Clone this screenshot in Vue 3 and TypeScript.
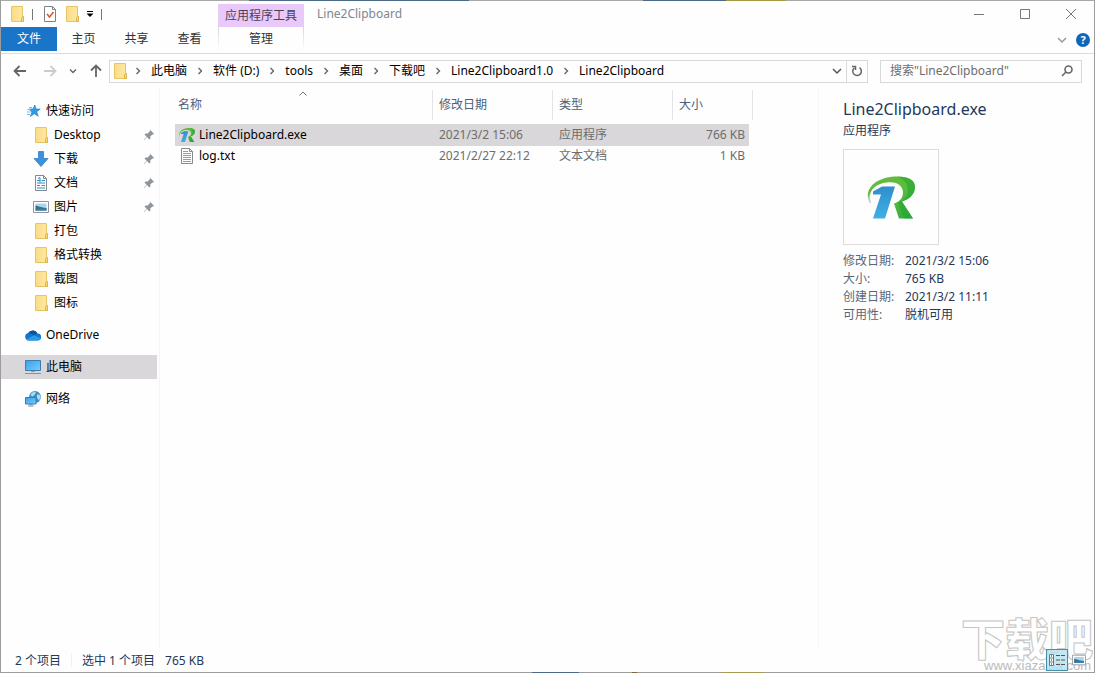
<script setup lang="ts">
import { ref } from 'vue'

interface NavItem {
  label: string
  icon: string
  pinned?: boolean
}
interface FileRow {
  name: string
  icon: string
  modified: string
  type: string
  size: string
}

const tabs = ['主页', '共享', '查看']
const crumbs = ['此电脑', '软件 (D:)', 'tools', '桌面', '下载吧', 'Line2Clipboard1.0', 'Line2Clipboard']
const quick: NavItem[] = [
  { label: 'Desktop', icon: 'folder', pinned: true },
  { label: '下载', icon: 'download', pinned: true },
  { label: '文档', icon: 'document', pinned: true },
  { label: '图片', icon: 'picture', pinned: true },
  { label: '打包', icon: 'folder' },
  { label: '格式转换', icon: 'folder' },
  { label: '截图', icon: 'folder' },
  { label: '图标', icon: 'folder' },
]
const roots: NavItem[] = [
  { label: 'OneDrive', icon: 'cloud' },
  { label: '此电脑', icon: 'pc' },
  { label: '网络', icon: 'network' },
]
const files: FileRow[] = [
  { name: 'Line2Clipboard.exe', icon: 'logo', modified: '2021/3/2 15:06', type: '应用程序', size: '766 KB' },
  { name: 'log.txt', icon: 'text', modified: '2021/2/27 22:12', type: '文本文档', size: '1 KB' },
]
const facts = [
  ['修改日期:', '2021/3/2 15:06'],
  ['大小:', '765 KB'],
  ['创建日期:', '2021/3/2 11:11'],
  ['可用性:', '脱机可用'],
]
const selected = ref('Line2Clipboard.exe')
const place = ref('此电脑')
const query = ref('')
</script>

<template>
  <svg class="defs" aria-hidden="true">
    <defs>
      <linearGradient id="g-folder" x1="0" y1="0" x2="1" y2="0">
        <stop offset="0" stop-color="#fbdc86" /><stop offset="1" stop-color="#fde9a4" />
      </linearGradient>
      <linearGradient id="g-green" x1="0" y1="0" x2="1" y2="1">
        <stop offset="0" stop-color="#6cb644" /><stop offset="0.5" stop-color="#5abf3a" /><stop offset="1" stop-color="#2aa83a" />
      </linearGradient>
      <linearGradient id="g-blue" x1="0" y1="0" x2="0" y2="1">
        <stop offset="0" stop-color="#2f8fcb" /><stop offset="1" stop-color="#3fb0e6" />
      </linearGradient>
      <linearGradient id="g-screen" x1="0" y1="0" x2="1" y2="1">
        <stop offset="0" stop-color="#3aa0ee" /><stop offset="1" stop-color="#74cdfb" />
      </linearGradient>
    </defs>
    <symbol id="i-folder" viewBox="-1 0 16 16">
      <path d="M1.5.5h11v10h1v5h-12z" fill="url(#g-folder)" stroke="#e8c468" />
      <path d="M11.5 15.5v-4l1-1h1v5z" fill="#fbd873" stroke="#dfb44c" />
    </symbol>
    <symbol id="i-star" viewBox="0 0 16 16">
      <path d="M9.8 2l1.2 4 4.200.1-3.500 2.600 1.500 4.500-3.900-2.500-3.900 2.900 1.600-4.600L4 6.200l4.100-.3z" fill="#2f9be6" stroke="#2482cc" stroke-width=".7" />
      <path d="M4 4.500h3M2.500 6.500h3M2 9h3.500M2 11.500h3" stroke="#6cbdf0" />
    </symbol>
    <symbol id="i-download" viewBox="0 0 16 16">
      <path d="M5.500.5h5v7h4.500L8 15.500 1 7.500h4.500z" fill="#3c91dc" stroke="#2f7fc8" stroke-width=".8" />
    </symbol>
    <symbol id="i-document" viewBox="0 0 16 16">
      <path d="M2.500.5h8l3 3v12h-11z" fill="#fff" stroke="#7f8a92" />
      <path d="M10.500.5v3h3" fill="none" stroke="#7f8a92" />
      <path d="M4 5.500h3M8.500 5.500h3.500M4 8h8M4 10.500h3M8.500 10.500h3.500M4 13h8" stroke="#2f8cc4" stroke-width="1.200" />
      <path d="M5 3.500l2-1v5" fill="none" stroke="#2f8cc4" />
    </symbol>
    <symbol id="i-picture" viewBox="0 0 16 16">
      <path d="M.5 2.500h15v11H.5z" fill="#fff" stroke="#8d969d" />
      <path d="M2.500 4.500h11v7h-11z" fill="#a8d6f2" />
      <path d="M2.500 6.500c3 .5 5 2 11 2.500v2.500h-11z" fill="#3f6f7e" />
      <path d="M2.500 10.500c4-1.500 7-.5 11-1v2h-11z" fill="#3b7fb2" />
    </symbol>
    <symbol id="i-cloud" viewBox="0 0 16 16">
      <path d="M3.800 13.500a3.800 3.800 0 0 1-.6-7.500A5.300 5.300 0 0 1 12.500 6.500 3.500 3.500 0 0 1 12.800 13.500z" fill="#1273cc" />
      <path d="M3.200 6A5.300 5.300 0 0 1 12.500 6.500c-2 .2-3.200 1.200-3.700 2C7.300 7 5.500 6 3.200 6z" fill="#0f52a0" />
      <path d="M.9 12.200L9 8.200l6.900 2.800c-.3 1.500-1.500 2.500-3.100 2.500h-9c-1.200 0-2.200-.5-2.900-1.300z" fill="#2a9ae8" />
    </symbol>
    <symbol id="i-pc" viewBox="0 0 16 16">
      <path d="M.5 1.500h15v10H.5z" fill="url(#g-screen)" stroke="#3c7ca8" />
      <path d="M6 12h4v1H6z" fill="#8fa3b0" /><path d="M0 14.500h16" stroke="#8193a0" />
    </symbol>
    <symbol id="i-network" viewBox="0 0 16 16">
      <circle cx="10" cy="6" r="5.900" fill="#3a8cc4" />
      <path d="M5.500 3.500C7.500 1 9.500.6 11 1L9.500 4 7 5.800zM12 3.500l2.500 0 1.300 3-2 3-2-3z" fill="#a9dcf0" />
      <path d="M.5 6.500h10.500v6.500H.5z" fill="url(#g-screen)" stroke="#327cb4" />
      <path d="M4.500 13.500h3M3 15h5.500" stroke="#73899a" />
    </symbol>
    <symbol id="i-text" viewBox="0 0 16 16">
      <path d="M2.500.5h8l3 3v12h-11z" fill="#fff" stroke="#8a8a8a" />
      <path d="M10.500.5v3h3" fill="none" stroke="#8a8a8a" />
      <path d="M4 3.500h5M4 5.500h8M4 7.500h8M4 9.500h8M4 11.500h8M4 13.500h8" stroke="#9a9a9a" />
    </symbol>
    <symbol id="i-logo" viewBox="0 0 48 42">
      <path d="M1 22C-1 8 14 0 30 0c12 0 18 4 18 10.500C48 18 42 23 35 25l11 17H32L27 27c6-2 9-6 9-11C36 8 28 5 20 6 9 7 3 13 2.500 21z" fill="url(#g-green)" />
      <path d="M30 0c12 0 18 4 18 10.500C48 18 42 23 35 25l11 17H37L31 26c6-2 10-6 10-12C41 7 37 3 30 0z" fill="#27a535" opacity=".6" />
      <path d="M1 20c0 3 1 5 2 7l1-1c-1-2-1-4-1-7z" fill="#bcc8bd" />
      <path d="M6 15l9-5h13L18 42H6l8-24H6z" fill="url(#g-blue)" />
    </symbol>
    <symbol id="i-pin" viewBox="0 0 12 12">
      <path d="M7 .8L11.200 5l-1.400.5-.5-.1-2 2 .1 2.100-1 1L4 8 .8 11.200 1 10.500 3.700 7.700 1.500 5.400l1-1 2.100.1 2-2z" fill="#8d959d" />
    </symbol>
    <symbol id="i-crumb" viewBox="0 0 6 8">
      <path d="M1.500 1l3 3-3 3" fill="none" stroke="#666" stroke-width="1.400" />
    </symbol>
    <symbol id="i-down" viewBox="0 0 10 10">
      <path d="M1 3l4 4 4-4" fill="none" stroke="currentColor" stroke-width="1.500" />
    </symbol>
  </svg>

  <div class="window">
    <header class="titlebar">
      <div class="quickbar">
        <svg class="ic"><use href="#i-folder" /></svg>
        <i class="bar"></i>
        <button aria-label="属性">
          <svg class="ic" viewBox="0 0 16 16">
            <path d="M2.500.5h8l3 3v12h-11z" fill="#fff" stroke="#808080" />
            <path d="M10.500.5v3h3" fill="none" stroke="#808080" />
            <path d="M5 8l2.500 3L11.500 6" fill="none" stroke="#d65a33" stroke-width="1.600" />
          </svg>
        </button>
        <button aria-label="新建文件夹"><svg class="ic"><use href="#i-folder" /></svg></button>
        <button aria-label="自定义快速访问工具栏">
          <svg class="menu-arrow" viewBox="0 0 8 8"><path d="M1 1.500h6" stroke="#000" /><path d="M.5 3.500h7L4 7z" /></svg>
        </button>
        <i class="bar"></i>
      </div>
      <div class="context-label">应用程序工具</div>
      <h1>Line2Clipboard</h1>
      <div class="controls">
        <button aria-label="最小化"><svg viewBox="0 0 12 12"><path d="M1 6.500h10" /></svg></button>
        <button aria-label="最大化"><svg viewBox="0 0 12 12"><path d="M1.500 1.500h9v9h-9z" /></svg></button>
        <button aria-label="关闭"><svg viewBox="0 0 12 12"><path d="M1 1l10 10M11 1L1 11" /></svg></button>
      </div>
    </header>

    <div class="ribbon">
      <button class="file-tab">文件</button>
      <button v-for="t in tabs" :key="t" class="tab">{{ t }}</button>
      <button class="context-tab">管理</button>
      <div class="ribbon-end">
        <button class="expand" aria-label="展开功能区"><svg class="s10"><use href="#i-down" /></svg></button>
        <button class="help" aria-label="帮助">?</button>
      </div>
    </div>

    <div class="addressrow">
      <div class="history">
        <button aria-label="返回"><svg viewBox="0 0 14 14"><path d="M13 7H2M6.500 2L1.500 7l5 5" /></svg></button>
        <button aria-label="前进" class="off"><svg viewBox="0 0 14 14"><path d="M1 7h11M7.500 2l5 5-5 5" /></svg></button>
        <button aria-label="最近浏览的位置" class="recent"><svg viewBox="0 0 14 14"><path d="M4 5.500l3 3 3-3" /></svg></button>
        <button aria-label="上移"><svg viewBox="0 0 14 14"><path d="M7 13V2M2 6.500l5-5 5 5" /></svg></button>
      </div>
      <nav class="address" aria-label="地址">
        <svg class="ic"><use href="#i-folder" /></svg>
        <template v-for="c in crumbs" :key="c">
          <svg class="sep"><use href="#i-crumb" /></svg>
          <button class="crumb">{{ c }}</button>
        </template>
        <button class="drop" aria-label="以前的位置"><svg class="s10"><use href="#i-down" /></svg></button>
        <button class="refresh" aria-label="刷新">
          <svg viewBox="0 0 12 12"><path d="M8.500 2.700A4.300 4.300 0 1 1 3.200 3M1 1.500h3.500V5" fill="none" stroke="#666" stroke-width="1.500" /></svg>
        </button>
      </nav>
      <label class="search">
        <input v-model="query" type="text" aria-label="搜索" placeholder='搜索"Line2Clipboard"' />
        <svg viewBox="0 0 12 12"><circle cx="7.500" cy="4.500" r="3.500" /><path d="M5 7L1 11" /></svg>
      </label>
    </div>

    <div class="body">
      <nav class="sidebar" aria-label="导航窗格">
        <button class="node"><svg class="ic"><use href="#i-star" /></svg><span>快速访问</span></button>
        <button v-for="n in quick" :key="n.label" class="node child">
          <svg class="ic"><use :href="'#i-' + n.icon" /></svg><span>{{ n.label }}</span>
          <svg v-if="n.pinned" class="pin"><use href="#i-pin" /></svg>
        </button>
        <button v-for="n in roots" :key="n.label" class="node root" :class="{ active: n.label === place }" @click="place = n.label">
          <svg class="ic"><use :href="'#i-' + n.icon" /></svg><span>{{ n.label }}</span>
        </button>
      </nav>

      <main class="list">
        <table>
          <colgroup><col class="c-name" /><col class="c-mid" /><col class="c-mid" /><col class="c-size" /></colgroup>
          <thead>
            <tr>
              <th scope="col" aria-sort="ascending">名称
                <svg class="sort" viewBox="0 0 8 5"><path d="M.5 4.500L4 1l3.500 3.500" /></svg>
              </th>
              <th scope="col">修改日期</th>
              <th scope="col">类型</th>
              <th scope="col">大小</th>
            </tr>
          </thead>
          <tbody>
            <tr v-for="f in files" :key="f.name" :class="{ selected: f.name === selected }" @click="selected = f.name">
              <td class="name"><div><svg class="ic"><use :href="'#i-' + f.icon" /></svg>{{ f.name }}</div></td>
              <td>{{ f.modified }}</td>
              <td>{{ f.type }}</td>
              <td class="num">{{ f.size }}</td>
            </tr>
          </tbody>
        </table>
      </main>

      <aside class="details">
        <h2>Line2Clipboard.exe</h2>
        <p>应用程序</p>
        <div class="thumb"><svg><use href="#i-logo" /></svg></div>
        <dl>
          <template v-for="[k, v] in facts" :key="k"><dt>{{ k }}</dt><dd>{{ v }}</dd></template>
        </dl>
      </aside>
    </div>

    <footer class="status">
      <span>2 个项目</span><i></i><span>选中 1 个项目</span><span class="bytes">765 KB</span>
      <div class="views">
        <button class="on" aria-label="详细信息">
          <svg viewBox="0 0 18 14">
            <path d="M1.500 1.500h4v11h-4zM1.500 5h4M1.500 9h4" fill="#fff" stroke="#777" />
            <path d="M8 2.500h4M13 2.500h4M8 7h4M13 7h4M8 11.500h4M13 11.500h4" stroke="#555" />
            <path d="M3 3h1M3 7h1M3 11h1" stroke="#222" />
          </svg>
        </button>
        <button aria-label="大图标"><svg class="large"><use href="#i-picture" /></svg></button>
      </div>
    </footer>

    <div class="stamp" aria-hidden="true"><b>下载吧</b><small>www.xiazaiba.com</small></div>
  </div>
</template>

<style>
html, body { margin: 0; background: #fff; }
</style>

<style scoped>
.defs { position: absolute; width: 0; height: 0; }
.window {
  position: relative;
  display: flex;
  flex-direction: column;
  box-sizing: border-box;
  min-height: 100vh;
  border: 1px solid #9c9c9c;
  border-top-color: #a8a8a8;
  background: #fefefe;
  color: #000;
  font: 12px/18px "Noto Sans", "Noto Sans CJK SC", sans-serif;
}
/* the desktop shows through the window's top and bottom edges */
.window::before,
.window::after {
  content: "";
  position: absolute;
  top: -1px;
  left: 0;
  right: 0;
  height: 1px;
  background: linear-gradient(to right, transparent 248px, #4a6a85 248px 468px, transparent 468px 642px, #4a6a85 642px 725px, #a89a40 725px 785px, transparent 785px);
}
.window::after {
  top: auto;
  bottom: -1px;
  background: linear-gradient(to right, transparent 531px, #4a6a85 531px 578px, transparent 578px 631px, #8a6238 631px 636px, transparent 636px 721px, #a89a50 721px 762px, transparent 762px);
}
button {
  margin: 0;
  padding: 0;
  border: 0;
  background: none;
  color: inherit;
  font: inherit;
  white-space: nowrap;
}
svg { display: block; flex: none; }
.ic { width: 16px; height: 16px; }
.s10 { width: 10px; height: 10px; }

.titlebar { display: flex; height: 26px; }
.quickbar { display: flex; align-items: center; width: 209px; padding-left: 8px; }
.quickbar .bar { width: 1px; height: 11px; margin: 0 9px 0 7px; background: #777; }
.quickbar button + button { margin-left: 6px; }
.menu-arrow { width: 8px; height: 8px; }
.context-label {
  width: 86px;
  margin-top: 3px;
  background: #e9c9fa;
  color: #4b3f58;
  line-height: 24px;
  text-align: center;
}
h1 { margin: 0 0 0 13px; color: #80868e; font-size: 12px; font-weight: 400; line-height: 26px; }
.controls { display: flex; margin-left: auto; }
.controls button { display: flex; align-items: center; justify-content: center; width: 46px; }
.controls svg { width: 12px; height: 12px; fill: none; stroke: #777; }

.ribbon { display: flex; height: 26px; border-bottom: 1px solid #dadbdc; color: #333; }
.ribbon > button { height: 24px; }
.file-tab { width: 56px; background: #1a74c8; color: #fff; }
.tab { width: 53px; }
.context-tab {
  box-sizing: border-box;
  width: 86px;
  margin-left: 2px;
  border: 1px solid;
  border-width: 0 1px;
  border-image: linear-gradient(#d5d5d8, #fff) 1;
}
.ribbon-end { display: flex; align-items: center; gap: 9px; margin-left: auto; padding-right: 4px; color: #999; }
.help {
  width: 14px;
  height: 14px;
  border-radius: 50%;
  background: #0f66b8;
  color: #fff;
  font-size: 11px;
  font-weight: 700;
  line-height: 14px;
}

.addressrow { display: flex; align-items: center; height: 34px; padding-right: 12px; }
.history { display: flex; align-items: center; width: 96px; padding-left: 12px; }
.history svg { width: 14px; height: 14px; fill: none; stroke: #666; stroke-width: 1.8; }
.history button + button { margin-left: 16px; }
.history .off svg { stroke: #ccc; }
.history .recent svg { stroke-width: 1.4; }
.history button.recent, .history .recent + button { margin-left: 9px; }
.address {
  display: flex;
  flex: 1;
  align-items: center;
  box-sizing: border-box;
  height: 23px;
  padding-left: 2px;
  border: 1px solid #d9d9d9;
}
.sep { width: 6px; height: 8px; margin: 0 10px; }
.address .ic + .sep { margin-left: 7px; }
.drop { margin-left: auto; color: #555; }
.refresh { align-self: stretch; margin-left: 4px; padding: 0 4px; border-left: 1px solid #d9d9d9; }
.refresh svg { width: 12px; height: 12px; }
.search {
  display: flex;
  align-items: center;
  box-sizing: border-box;
  width: 202px;
  height: 23px;
  margin-left: 12px;
  padding: 0 8px 0 9px;
  border: 1px solid #d9d9d9;
}
.search input { flex: 1; min-width: 0; padding: 0; border: 0; outline: 0; background: none; color: #333; font: inherit; }
.search input::placeholder { color: #6d6d6d; opacity: 1; }
.search svg { width: 12px; height: 12px; fill: none; stroke: #666; stroke-width: 1.6; }

.body { display: flex; flex: 1; }
.sidebar { box-sizing: border-box; width: 159px; padding: 11px 2px 0 0; border-right: 1px solid #f5f5f5; }
.node { display: flex; align-items: center; width: 100%; height: 24px; padding-left: 24px; text-align: left; }
.node span { margin-left: 5px; }
.child { padding-left: 32px; }
.pin { width: 12px; height: 12px; margin: 0 2px 0 auto; }
.root { margin-top: 8px; }
.active { background: #d9d7d9; }

.list { flex: 1; min-width: 0; padding: 2px 0 0 15px; }
table { width: 578px; border-collapse: separate; border-spacing: 0; table-layout: fixed; }
.c-name { width: 258px; }
.c-mid { width: 120px; }
.c-size { width: 80px; }
th {
  position: relative;
  box-sizing: border-box;
  height: 30px;
  padding: 0 0 0 6px;
  border-right: 1px solid #e4e4e6;
  color: #4c607a;
  font-weight: 400;
  text-align: left;
}
th:first-child { padding-left: 3px; }
.sort { position: absolute; top: 1px; left: 124px; width: 8px; height: 5px; fill: none; stroke: #777; }
tbody::before { content: ""; display: block; height: 4px; }
td { box-sizing: border-box; height: 22px; padding: 0 0 0 6px; color: #6d6d6d; line-height: 18px; }
tr:not(.selected) td { padding-bottom: 2px; }
td.name { padding-left: 4px; color: #000; }
.name div { display: flex; align-items: center; gap: 4px; }
td.num { padding-right: 8px; text-align: right; }
.selected td { background: #d9d7d9; }
.selected td.num { background: linear-gradient(to left, transparent 4px, #d9d7d9 4px); }

.details { box-sizing: border-box; width: 276px; padding: 9px 12px 0 24px; border-left: 1px solid #f7f7f7; color: #1e395b; }
h2 { margin: 0; font-size: 16px; font-weight: 400; line-height: 24px; }
.details p { margin: 1px 0 0; }
.thumb {
  display: flex;
  align-items: center;
  justify-content: center;
  box-sizing: border-box;
  width: 96px;
  height: 96px;
  margin: 9px 0 7px;
  border: 1px solid #dcdcdc;
}
.thumb svg { width: 48px; height: 43px; }
dl { display: grid; grid-template-columns: 62px 1fr; margin: 0; }
dt { color: #5a6779; }
dd { margin: 0; }

.status { display: flex; align-items: center; height: 24px; padding-left: 14px; color: #1e395b; }
.status span { padding-top: 2px; }
.status i { width: 1px; height: 14px; margin: 0 10px; background: #f0f0f0; }
.status .bytes { margin-left: 10px; }
.views { position: relative; z-index: 1; display: flex; align-items: center; margin-left: auto; padding-right: 4px; }
.views button { display: flex; align-items: center; justify-content: center; width: 22px; height: 22px; }
.views .on { box-sizing: border-box; border: 1px solid #3c92a8; background: rgba(175, 224, 240, 0.75); }
.views .on svg { width: 18px; height: 14px; }
.large { width: 14px; height: 14px; }

.stamp {
  position: absolute;
  right: 1px;
  bottom: 0;
  display: flex;
  flex-direction: column;
  align-items: flex-end;
  color: #fff;
  font-family: "Noto Sans CJK SC", sans-serif;
  pointer-events: none;
}
.stamp b { font-size: 44px; font-weight: 900; line-height: 44px; -webkit-text-stroke: 1px #c4c4c4; }
.stamp small { padding-right: 2px; font: 13px/13px "Liberation Sans", sans-serif; color: #bbb; }
</style>
